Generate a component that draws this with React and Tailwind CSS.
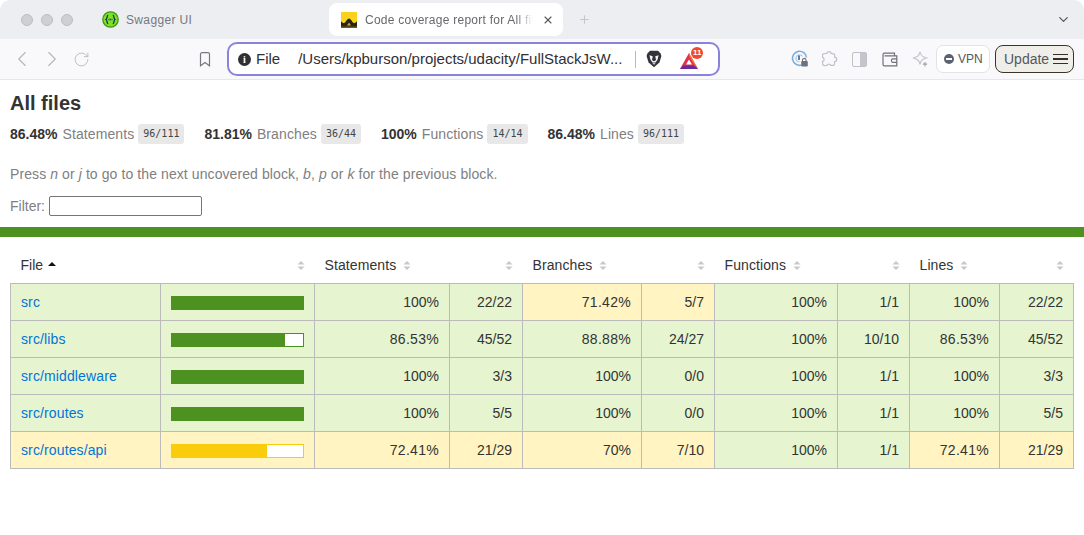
import React from 'react';
import { ChevronDown, ChevronLeft, ChevronRight, Plus, RotateCw, X } from 'lucide-react';

const rows = [
  { name: 'src', pct: 100, tone: 'high', cells: [['100%', '22/22', 'high'], ['71.42%', '5/7', 'medium'], ['100%', '1/1', 'high'], ['100%', '22/22', 'high']] },
  { name: 'src/libs', pct: 86.53, tone: 'high', cells: [['86.53%', '45/52', 'high'], ['88.88%', '24/27', 'high'], ['100%', '10/10', 'high'], ['86.53%', '45/52', 'high']] },
  { name: 'src/middleware', pct: 100, tone: 'high', cells: [['100%', '3/3', 'high'], ['100%', '0/0', 'high'], ['100%', '1/1', 'high'], ['100%', '3/3', 'high']] },
  { name: 'src/routes', pct: 100, tone: 'high', cells: [['100%', '5/5', 'high'], ['100%', '0/0', 'high'], ['100%', '1/1', 'high'], ['100%', '5/5', 'high']] },
  { name: 'src/routes/api', pct: 72.41, tone: 'medium', cells: [['72.41%', '21/29', 'medium'], ['70%', '7/10', 'medium'], ['100%', '1/1', 'high'], ['72.41%', '21/29', 'medium']] },
];

const stats = [
  ['86.48%', 'Statements', '96/111'],
  ['81.81%', 'Branches', '36/44'],
  ['100%', 'Functions', '14/14'],
  ['86.48%', 'Lines', '96/111'],
];

const toneBg = { high: 'bg-[#e6f5d0]', medium: 'bg-[#fff4c2]' };

function SortArrows({ active }) {
  return (
    <svg width="8" height="11" viewBox="0 0 8 11" className="shrink-0">
      {active ? (
        <path d="M0 6 L4 2 L8 6 Z" fill="#111" />
      ) : (
        <>
          <path d="M0.5 4.5 L4 1 L7.5 4.5 Z" fill="#c8c8c8" />
          <path d="M0.5 6.5 L4 10 L7.5 6.5 Z" fill="#c8c8c8" />
        </>
      )}
    </svg>
  );
}

function SwaggerIcon() {
  return (
    <svg width="17" height="17" viewBox="0 0 17 17" className="shrink-0">
      <circle cx="8.5" cy="8.5" r="7.7" fill="#7fe02c" stroke="#3f9a12" strokeWidth="1.3" />
      <path d="M6.2 4.2 C4.6 4.4 5.4 7.8 4 8.5 C5.4 9.2 4.6 12.6 6.2 12.8 M10.8 4.2 C12.4 4.4 11.6 7.8 13 8.5 C11.6 9.2 12.4 12.6 10.8 12.8" fill="none" stroke="#173647" strokeWidth="1.3" />
      <path d="M6.6 8.5 H10.4" stroke="#173647" strokeWidth="1.3" strokeDasharray="1 0.6" />
    </svg>
  );
}

function CoverageIcon() {
  return (
    <svg width="16" height="16" viewBox="0 0 16 16" className="shrink-0">
      <rect width="16" height="16" fill="#f8d21c" />
      <path d="M0 15.5 V9 C1.5 11.5 3.5 11.5 4.5 10 C5.5 8 6.5 7 8 6.5 C9.5 7 10.5 8 11.5 10 C12.5 11.5 14.5 11.5 16 9 V15.5 Z" fill="#2a2417" />
      <path d="M6 13.5 H10 L8 10.5 Z" fill="#d9a441" />
      <rect y="14.5" width="16" height="1.5" fill="#6f5a18" />
    </svg>
  );
}

function LionIcon() {
  return (
    <svg width="16" height="18" viewBox="0 0 16 18" className="shrink-0">
      <path d="M4 0.8 H12 L14.6 3.4 L15.4 6 L13.4 12.6 L8 17.2 L2.6 12.6 L0.6 6 L1.4 3.4 Z" fill="#33323a" />
      <path d="M3.4 5.2 L6.8 6.2 L6 9.8 L7 11 H9 L10 9.8 L9.2 6.2 L12.6 5.2 L11.6 9.4 L9.6 12.4 H6.4 L4.4 9.4 Z" fill="#f4f4f6" />
      <path d="M6.4 13.2 H9.6 L8 14.8 Z" fill="#f4f4f6" />
    </svg>
  );
}

function RewardsIcon() {
  return (
    <div className="relative w-[24px] h-[22px]">
      <svg width="18" height="16" viewBox="0 0 18 16" className="absolute left-0 bottom-[1px]">
        <path d="M9 0 L18 16 H0 Z" fill="#e0304a" />
        <path d="M0 16 H18 L14.6 12.6 H3.4 Z" fill="#6a2a9c" />
        <path d="M9 0 L18 16 L14.6 12.6 L9 3 Z" fill="#f0742c" />
        <path d="M9 6.5 L12 11.6 H6 Z" fill="#fff" />
      </svg>
      <span className="absolute right-[1px] top-[-1px] w-[12px] h-[12px] rounded-full bg-[#f0492e] text-white text-[8px] leading-[12px] text-center font-bold">11</span>
    </div>
  );
}

function App() {
  return (
    <div className="w-[1084px] h-[535px] overflow-hidden bg-white text-[#333] font-['Liberation_Sans',Arial,sans-serif]">
      {/* Tab strip */}
      <div className="h-[39px] bg-[#eceef2] flex items-center rounded-t-[10px] pl-[21px] pr-[13px]">
        <div className="flex gap-[8px]">
          <span className="w-[12px] h-[12px] rounded-full bg-[#cfd0d3] border border-[#bcbdc1]" />
          <span className="w-[12px] h-[12px] rounded-full bg-[#cfd0d3] border border-[#bcbdc1]" />
          <span className="w-[12px] h-[12px] rounded-full bg-[#cfd0d3] border border-[#bcbdc1]" />
        </div>
        <div className="flex items-center ml-[29px] w-[227px]">
          <SwaggerIcon />
          <span className="ml-[7px] text-[12px] text-[#77797e] tracking-[0.35px]">Swagger UI</span>
        </div>
        <div className="flex items-center w-[234px] h-[33px] bg-white rounded-[8px] pl-[12px] pr-[9px]">
          <CoverageIcon />
          <span className="ml-[8px] w-[168px] overflow-hidden whitespace-nowrap text-[12px] text-[#66686d] tracking-[0.25px] [mask-image:linear-gradient(to_right,black_90%,transparent)]">Code coverage report for All files</span>
          <X size={12} color="#55575c" strokeWidth={2.2} className="ml-auto" />
        </div>
        <Plus size={13} color="#c4c6cb" strokeWidth={2} className="ml-[15px]" />
        <ChevronDown size={15} color="#55575c" strokeWidth={2} className="ml-auto" />
      </div>

      {/* Toolbar */}
      <div className="h-[41px] bg-[#f9f9fb] border-b border-[#e6e7ea] flex items-center pl-[9px]">
        <ChevronLeft size={26} color="#b4b6bb" strokeWidth={1} />
        <ChevronRight size={26} color="#b4b6bb" strokeWidth={1} className="ml-[4px]" />
        <RotateCw size={17} color="#b4b6bb" strokeWidth={1.2} className="ml-[8px]" />
        <svg width="12" height="15" viewBox="0 0 12 15" fill="none" stroke="#77797e" strokeWidth="1.2" className="ml-[109px] shrink-0">
          <path d="M1.5 2.2 C1.5 1.2 2.2 0.7 3 0.7 H9 C9.8 0.7 10.5 1.2 10.5 2.2 V13.8 L6 10.6 L1.5 13.8 Z" />
        </svg>
        <div className="ml-[16px] w-[493px] h-[34px] rounded-[10px] border-2 border-[#8a83dc] bg-white flex items-center pl-[9px]">
          <span className="w-[13px] h-[13px] rounded-full bg-[#2f3035] text-white text-[10px] leading-[13px] text-center font-bold font-['Liberation_Serif',serif]">i</span>
          <span className="ml-[5px] text-[15px] text-[#2f3035]">File</span>
          <span className="ml-[18px] w-[326px] text-[15px] text-[#2f3035] whitespace-nowrap overflow-hidden">/Users/kpburson/projects/udacity/FullStackJsW...</span>
          <span className="ml-[11px] w-px h-[17px] bg-[#b9babf]" />
          <div className="ml-[10px]"><LionIcon /></div>
          <div className="ml-[18px]"><RewardsIcon /></div>
        </div>
        {/* Extension icons */}
        <svg width="18" height="18" viewBox="0 0 18 18" fill="none" className="ml-[71px] shrink-0">
          <path d="M10.5 15 A7 7 0 1 1 15.5 7.5" stroke="#7fb0dc" strokeWidth="1.7" />
          <path d="M8.6 12 A3.6 3.6 0 1 1 11.6 6.5" stroke="#a9c9e6" strokeWidth="1.2" />
          <path d="M8 5.5 V10" stroke="#4d6f96" strokeWidth="1.8" />
          <path d="M11.5 11 V9.8 A1.8 1.8 0 0 1 15 9.8 V11" stroke="#6f7278" strokeWidth="1.1" />
          <rect x="10.2" y="11" width="6.6" height="5.6" rx="1" fill="#6f7278" />
        </svg>
        <svg width="18" height="18" viewBox="0 0 18 18" fill="none" stroke="#bfc1c6" strokeWidth="1.2" className="ml-[11px] shrink-0">
          <path d="M7 3.5 C7 1 11 1 11 3.5 C12.5 3.6 14.2 3.4 14.6 4.4 C15 5.4 14.3 6.5 14.6 7.2 C17.4 7.4 17.4 11.4 14.6 11.6 C14.6 13 15 14.4 14 15.2 C13 15.8 11.6 15.2 10.8 15.4 C10 13.6 7.6 13.6 7 15.4 C5.6 15.6 3.8 15.8 3 15 C2.2 14.2 2.6 12.6 2.6 11.4 C4.6 10.8 4.6 8 2.6 7.4 C2.6 6.2 2.2 4.8 3 4 C3.8 3.2 5.6 3.6 7 3.5 Z" />
        </svg>
        <div className="ml-[14px] w-[15px] h-[15px] border border-[#bfc1c6] rounded-[2px] flex justify-end">
          <div className="w-[6px] bg-[#c4c6cb]" />
        </div>
        <svg width="16" height="15" viewBox="0 0 16 15" fill="none" stroke="#6f7176" strokeWidth="1.2" className="ml-[15px] shrink-0">
          <path d="M2.5 1.2 H12.5 V3.8 M1 2.8 C1 1.8 1.6 1.2 2.5 1.2 M1 2.8 V12.4 C1 13.3 1.6 13.8 2.5 13.8 H14.8 V3.8 H2.5" />
          <path d="M14.8 6.8 H10.8 C9 6.8 9 10.4 10.8 10.4 H14.8" />
        </svg>
        <svg width="16" height="16" viewBox="0 0 16 16" fill="none" stroke="#c4c6cb" strokeWidth="1.2" className="ml-[14px] shrink-0">
          <path d="M8 1 C8.8 4.4 10 5.8 14.6 7 C10 8.2 8.8 9.6 8 13.4 C7.2 9.6 6 8.2 1 7 C6 5.8 7.2 4.4 8 1 Z" />
          <path d="M13 11 V15.4 M10.8 13.2 H15.2" stroke="#9fa2a8" />
        </svg>
        <div className="ml-[8px] w-[54px] h-[28px] rounded-[7px] border border-[#e2e3e7] bg-white flex items-center pl-[7px]">
          <span className="w-[10px] h-[10px] rounded-full bg-[#5d6272] flex items-center justify-center">
            <span className="w-[6px] h-[2px] bg-white" />
          </span>
          <span className="ml-[4px] text-[12px] text-[#55575c]">VPN</span>
        </div>
        <div className="ml-[5px] w-[79px] h-[28px] rounded-[8px] border border-[#3a3526] bg-[#efeee8] flex items-center pl-[8px]">
          <span className="text-[14px] text-[#55575c]">Update</span>
          <div className="ml-[4px] flex flex-col gap-[3px]">
            <span className="block w-[15px] h-[1.5px] bg-[#33302a]" />
            <span className="block w-[15px] h-[1.5px] bg-[#33302a]" />
            <span className="block w-[15px] h-[1.5px] bg-[#33302a]" />
          </div>
        </div>
      </div>

      {/* Report header */}
      <div className="px-[10px] pt-[11px] h-[147px]">
        <h1 className="text-[20px] leading-[24px] font-bold">All files</h1>
        <div className="flex mt-[9px] text-[14px] leading-[20px]">
          {stats.map(([pct, label, frac], i) => (
            <div key={i} className="flex items-center mr-[20px]">
              <span className="font-bold">{pct}</span>
              <span className="ml-[5px] text-[#808080] tracking-[0.1px]">{label}</span>
              <span className="ml-[4px] h-[20px] px-[5px] rounded-[3px] bg-[#e8e8e8] font-['DejaVu_Sans_Mono',monospace] text-[10px] leading-[20px] text-[#444]">{frac}</span>
            </div>
          ))}
        </div>
        <p className="mt-[20px] text-[14px] leading-[20px] text-[#808080] tracking-[0.09px]">
          Press <em>n</em> or <em>j</em> to go to the next uncovered block, <em>b</em>, <em>p</em> or <em>k</em> for the previous block.
        </p>
        <div className="flex items-center mt-[10px] text-[14px] text-[#808080]">
          <span className="mt-[2px]">Filter:</span>
          <input type="text" className="ml-[4px] w-[153px] h-[20px] bg-white border border-[#767676] rounded-[2px]" />
        </div>
      </div>

      <div className="h-[10px] bg-[#4d9221]" />

      {/* Coverage table */}
      <div className="px-[10px] pt-[10px]">
        <table className="table-fixed border-collapse w-[1063px] text-[14px]">
          <colgroup>
            <col className="w-[150px]" />
            <col className="w-[154px]" />
            <col className="w-[135px]" />
            <col className="w-[73px]" />
            <col className="w-[119px]" />
            <col className="w-[73px]" />
            <col className="w-[123px]" />
            <col className="w-[72px]" />
            <col className="w-[90px]" />
            <col className="w-[74px]" />
          </colgroup>
          <thead>
            <tr className="h-[36px]">
              <th className="font-normal text-left pl-[10px] pt-[2px]">
                <div className="flex items-center gap-[5px]">File <SortArrows active /></div>
              </th>
              <th className="font-normal pr-[10px] pt-[2px]"><div className="flex justify-end"><SortArrows /></div></th>
              {['Statements', 'Branches', 'Functions', 'Lines'].map((label) => (
                <React.Fragment key={label}>
                  <th className="font-normal text-left pl-[10px] pt-[2px]">
                    <div className="flex items-center gap-[7px] whitespace-nowrap tracking-[0.1px]">{label} <SortArrows /></div>
                  </th>
                  <th className="font-normal pr-[10px] pt-[2px]"><div className="flex justify-end"><SortArrows /></div></th>
                </React.Fragment>
              ))}
            </tr>
          </thead>
          <tbody>
            {rows.map((row) => (
              <tr key={row.name} className="h-[37px]">
                <td className={`border border-[#bbb] pl-[10px] pt-[2px] ${toneBg[row.tone]}`}>
                  <a href="#" className="text-[#0074d9] tracking-[0.12px]">{row.name}</a>
                </td>
                <td className={`border border-[#bbb] px-[10px] pt-[2px] ${toneBg[row.tone]}`}>
                  <div className={`h-[14px] flex border ${row.tone === 'high' ? 'border-[#4d9221]' : 'border-[#f9cd0b]'} bg-white`}>
                    <div
                      className={row.tone === 'high' ? 'bg-[#4d9221]' : 'bg-[#f9cd0b]'}
                      style={{ width: `${row.pct}%` }}
                    />
                  </div>
                </td>
                {row.cells.map(([pct, frac, tone], i) => (
                  <React.Fragment key={i}>
                    <td className={`border border-[#bbb] text-right pr-[10px] pt-[2px] ${toneBg[tone]} ${pct.includes('.') ? 'tracking-[0.3px]' : ''}`}>{pct}</td>
                    <td className={`border border-[#bbb] text-right pr-[10px] pt-[2px] ${toneBg[tone]}`}>{frac}</td>
                  </React.Fragment>
                ))}
              </tr>
            ))}
          </tbody>
        </table>
      </div>
    </div>
  );
}

export default App;
